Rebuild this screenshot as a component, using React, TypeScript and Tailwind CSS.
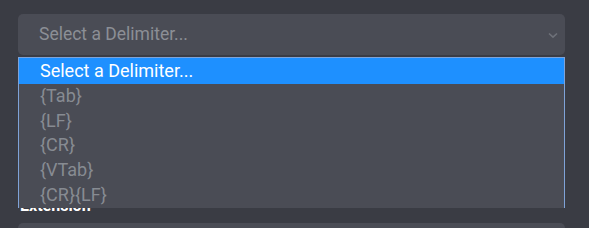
import React from 'react';

const options = ['{Tab}', '{LF}', '{CR}', '{VTab}', '{CR}{LF}'];

export default function App() {
  return (
    <div className="h-[228px] w-full overflow-hidden bg-[#3a3c44] font-['Roboto',sans-serif]">
      <div className="relative flex flex-col pl-[18px] pr-[24px] pt-[14px]">
        {/* Closed select */}
        <div className="flex h-[41px] items-center justify-between rounded-[5px] bg-[#4a4c55] pl-[21px] pr-[7px]">
          <span className="text-[17.5px] leading-none text-[#8c8f96]">Select a Delimiter...</span>
          <svg width="10" height="7" viewBox="0 0 10 7" className="mt-[1px]">
            <path d="M1 1.5 L5 5.2 L9 1.5" fill="none" stroke="#6e7179" strokeWidth="1.6" />
          </svg>
        </div>

        {/* Next field, mostly hidden under the open list */}
        <div className="mt-[141px] pl-[2px] text-[16px] font-bold leading-[20px] text-white">Extension</div>
        <div className="mt-[7px] h-[40px] rounded-[5px] bg-[#4a4c55]" />

        {/* Open option list */}
        <div className="absolute left-[18px] top-[57px] w-[547px] border-x-[1.5px] border-t border-[#7fa3d8] bg-[#4a4c55] pb-[1px]">
          <div className="flex h-[26px] items-center bg-[#1e90ff] pl-[21px] text-[18px] leading-none text-white">
            Select a Delimiter...
          </div>
          {options.map((opt) => (
            <div key={opt} className="flex h-[24.6px] items-center pl-[21px] text-[18px] leading-none text-[#878b92]">
              {opt}
            </div>
          ))}
        </div>
      </div>
    </div>
  );
}
